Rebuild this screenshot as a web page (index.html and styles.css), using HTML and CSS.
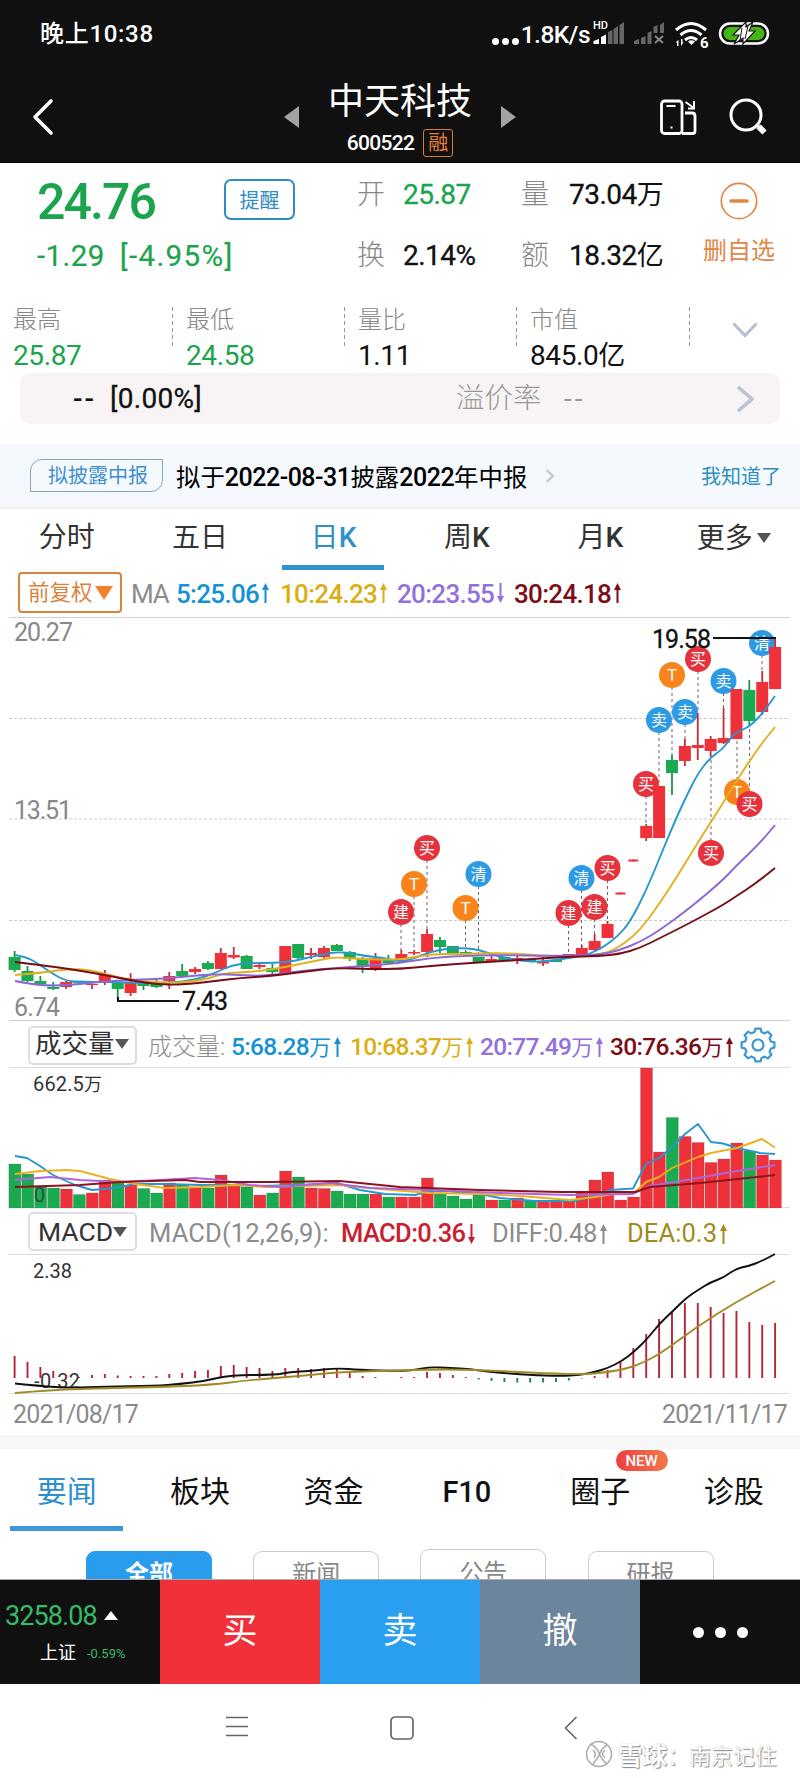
FILE: index.html
```html
<!DOCTYPE html>
<html lang="zh-CN">
<head>
<meta charset="utf-8">
<title>中天科技 600522</title>
<link rel="stylesheet" href="styles.css">
</head>
<body>
<div class="phone">
  <header class="top">
    <div class="status">
      <span class="clock">晚上10:38</span>
      <span class="net"><i class="dots"><b></b><b></b><b></b></i><span class="speed">1.8K/s</span></span>
      <svg class="status-icons" width="180" height="34" viewBox="590 16 180 34">
        <text x="593" y="29" class="hd">HD</text>
        <path fill="#fff" d="M593.500 44v-3l5.500-2v5zM601 44v-7l5-2.500v9.500z"/>
        <path fill="#666" d="M608 44V32l4.500-2v14zM613.500 44V29l4.500-3v18zM619.500 44V25l4.500-3v22zM634 44v-3l5-2v5zM641 44v-6l4.500-2v8zM647.500 44V33l4-2v13zM653.500 33v-6l4-2v8zM660 33v-8l4-3v11z"/>
        <path stroke="#888" stroke-width="2" d="M655 36l8 7M663 36l-8 7"/>
        <g fill="none" stroke="#fff" stroke-width="3"><path d="M676 30q15-13 30 0M680.500 35q10.500-9 21 0M685 40q6-5 12 0"/></g>
        <path fill="#fff" d="M688 41.500q3.500-2.500 7 0L691.500 45zM676 42l2.500-2v6h-1.500v-3zM681 39h1.500v3.500h1l-2.500 3.500z"/>
        <text x="700" y="48" class="six">6</text>
        <rect x="720" y="23.500" width="48" height="20" rx="10" fill="#151515" stroke="#fff" stroke-width="2.500"/>
        <rect x="723.500" y="27" width="41" height="13" rx="6.500" fill="#45b514"/>
        <path d="M746 22L733 35h6l-5 9 9-6 0 6 12-13h-6l4-9-7 5z" fill="#fff" stroke="#151515" stroke-width="1.200"/>
        <path d="M742 28l-2 12M748 26l-3 13" stroke="#151515" stroke-width="1"/>
      </svg>
    </div>
    <div class="titlebar">
      <svg width="28" height="40" viewBox="0 0 28 40"><path d="M23 4L7 20l16 16" fill="none" stroke="#fff" stroke-width="3.600" stroke-linecap="round" stroke-linejoin="round"/></svg>
      <svg width="16" height="22" viewBox="0 0 16 22"><path d="M0 11L15 0v22z" fill="#a2a2a2"/></svg>
      <div class="title"><h1>中天科技</h1><p><span class="code">600522</span><span class="tag">融</span></p></div>
      <svg width="16" height="22" viewBox="0 0 16 22"><path d="M16 11L1 0v22z" fill="#a2a2a2"/></svg>
      <svg width="38" height="38" viewBox="659 98 38 38" fill="none" stroke="#fff" stroke-width="2.800"><rect x="661.500" y="101" width="20.500" height="32.500" rx="3"/><path d="M682 133.500h10.500q2.500 0 2.500-2.500V116q0-3-3-3h-7"/><path d="M666.500 106h9M670.500 127.500h2M685.500 102l8.500 6M694 101v7.500h-6" stroke-width="2"/></svg>
      <svg width="40" height="38" viewBox="728 98 40 38" fill="none" stroke="#fff" stroke-width="3"><circle cx="746" cy="115" r="15"/><path d="M757 125l3 3" /><path d="M758.500 126.500l6 6" stroke-width="6"/></svg>
    </div>
  </header>

  <section class="quote">
    <div class="price">24.76</div>
    <button class="remind">提醒</button>
    <span class="k">开</span><span class="v green">25.87</span><span class="k">量</span><span class="v">73.04<em>万</em></span>
    <div class="unfollow"><svg width="38" height="38" viewBox="0 0 38 38"><circle cx="19" cy="19" r="17.700" fill="none" stroke="#e08746" stroke-width="1.700"/><path d="M11 19h16" stroke="#e08746" stroke-width="3.600" stroke-linecap="round"/></svg><span>删自选</span></div>
    <div class="change"><span>-1.29</span><span>[-4.95%]</span></div>
    <span class="k k2">换</span><span class="v v2">2.14%</span><span class="k k2">额</span><span class="v v2">18.32<em>亿</em></span>
  </section>

  <section class="stats">
    <div><small>最高</small><span class="green">25.87</span></div>
    <div><small>最低</small><span class="green">24.58</span></div>
    <div><small>量比</small><span>1.11</span></div>
    <div><small>市值</small><span>845.0<em>亿</em></span></div>
    <div class="expand"><svg width="26" height="16" viewBox="0 0 26 16"><path d="M1.500 1.500L13 13.500 24.500 1.500" fill="none" stroke="#b2c1cf" stroke-width="3"/></svg></div>
  </section>

  <section class="premium"><span class="dash">--</span><span class="pct">[0.00%]</span><span class="label">溢价率</span><span class="dash2">--</span>
    <svg width="18" height="28" viewBox="0 0 18 28"><path d="M2 2l14 12L2 26" fill="none" stroke="#b9c4d0" stroke-width="3.600"/></svg></section>

  <section class="notice"><span class="chip">拟披露中报</span><span class="msg">拟于<b>2022-08-31</b>披露<b>2022</b>年中报</span>
    <svg width="10" height="14" viewBox="0 0 10 14"><path d="M1.500 1l6.500 6-6.500 6" fill="none" stroke="#b9c4d0" stroke-width="2"/></svg><a>我知道了</a></section>

  <nav class="periods"><span>分时</span><span>五日</span><span class="on">日<b>K</b></span><span>周<b>K</b></span><span>月<b>K</b></span><span class="rest">更多<i class="tri"></i></span></nav>

  <div class="ma">
    <span class="adjust">前复权<i class="tri"></i></span><span class="gray">MA</span>
    <span class="c5">5:25.06<svg class="ar" viewBox="0 0 7 20"><path d="M3.500 0L7 7H4.500v13h-2V7H0z"/></svg></span>
    <span class="c10">10:24.23<svg class="ar" viewBox="0 0 7 20"><path d="M3.500 0L7 7H4.500v13h-2V7H0z"/></svg></span>
    <span class="c20">20:23.55<svg class="ar" viewBox="0 0 7 20"><path d="M3.500 20L7 13H4.500V0h-2v13H0z"/></svg></span>
    <span class="c30">30:24.18<svg class="ar" viewBox="0 0 7 20"><path d="M3.500 0L7 7H4.500v13h-2V7H0z"/></svg></span>
  </div>
  <svg id="candles" class="chart" width="800" height="404" viewBox="0 617 800 404"></svg>

  <div class="ind vol">
    <span class="select">成交量<i class="tri"></i></span><span class="gray">成交量:</span>
    <span class="c5">5:68.28<em>万</em><svg class="ar" viewBox="0 0 7 20"><path d="M3.500 0L7 7H4.500v13h-2V7H0z"/></svg></span>
    <span class="c10">10:68.37<em>万</em><svg class="ar" viewBox="0 0 7 20"><path d="M3.500 0L7 7H4.500v13h-2V7H0z"/></svg></span>
    <span class="c20">20:77.49<em>万</em><svg class="ar" viewBox="0 0 7 20"><path d="M3.500 0L7 7H4.500v13h-2V7H0z"/></svg></span>
    <span class="c30">30:76.36<em>万</em><svg class="ar" viewBox="0 0 7 20"><path d="M3.500 0L7 7H4.500v13h-2V7H0z"/></svg></span>
    <svg id="gear" width="36" height="36" viewBox="-18 -18 36 36"></svg>
  </div>
  <svg id="volume" class="chart" width="800" height="142" viewBox="0 1067 800 142"></svg>

  <div class="ind macd">
    <span class="select">MACD<i class="tri"></i></span><span class="gray fn">MACD(12,26,9):</span>
    <span class="cm">MACD:0.36<svg class="ar" viewBox="0 0 7 20"><path d="M3.500 20L7 13H4.500V0h-2v13H0z"/></svg></span>
    <span class="gray">DIFF:0.48<svg class="ar" viewBox="0 0 7 20"><path d="M3.500 0L7 7H4.500v13h-2V7H0z"/></svg></span>
    <span class="cd">DEA:0.3<svg class="ar" viewBox="0 0 7 20"><path d="M3.500 0L7 7H4.500v13h-2V7H0z"/></svg></span>
  </div>
  <svg id="macd" class="chart" width="800" height="142" viewBox="0 1253 800 142"></svg>
  <div class="dates"><span>2021/08/17</span><span>2021/11/17</span></div>

  <nav class="sections"><span class="on">要闻</span><span>板块</span><span>资金</span><span class="f10">F10</span><span>圈子<sup>NEW</sup></span><span>诊股</span></nav>
  <div class="pills"><span class="on">全部</span><span>新闻</span><span class="up">公告</span><span>研报</span></div>

  <footer class="actions">
    <div class="index"><p class="pt">3258.08<i></i></p><p class="nm"><span>上证</span><small>-0.59%</small></p></div>
    <div class="buy">买</div><div class="sell">卖</div><div class="cancel">撤</div>
    <div class="more"><i></i><i></i><i></i></div>
  </footer>
  <div class="sysnav">
    <svg width="22" height="22" viewBox="0 0 22 22"><path d="M0 1.500h22M0 10.500h22M0 19.500h22" stroke="#666" stroke-width="1.600"/></svg>
    <svg width="24" height="24" viewBox="0 0 24 24"><rect x="1" y="1" width="22" height="22" rx="4" fill="none" stroke="#666" stroke-width="1.700"/></svg>
    <svg width="14" height="24" viewBox="0 0 14 24"><path d="M12.500 1L1.500 12l11 11" fill="none" stroke="#666" stroke-width="1.700"/></svg>
    <div class="mark"><svg width="28" height="28" viewBox="0 0 28 28" fill="none" stroke="#aaa"><circle cx="14" cy="14" r="12.500" stroke-width="1.500"/><path d="M5 4q7 3 9 9t8 11M22 5q-5 3-7 8t-7 11M8 10q4 4 1 8M20 10q-5 4 0 8" stroke-width="1.500"/></svg><b>雪球</b><span>：南京记住</span></div>
  </div>
</div>
<script src="script.js"></script>
</body>
</html>
```
FILE: styles.css
```css
* { box-sizing: border-box; }
body { margin: 0; background: #fff; font-family: Roboto, "Noto Sans CJK SC", sans-serif; font-weight: 400; color: #111; }
h1, p { margin: 0; font-weight: 400; }
em, i { font-style: normal; }
svg { display: block; flex: none; }
.phone { width: 800px; height: 1778px; overflow: hidden; display: flex; flex-direction: column; }
.phone > * { flex: none; }
span, div { white-space: nowrap; }
.green { color: #1ba44c; }
.gray { color: #8c8c8c; }
.tri { display: inline-block; border: 7px solid transparent; border-top: 10px solid #555; border-bottom: 0; }

.top { height: 163px; background: #101010; color: #fff; border-bottom: 1px solid #000; }
.status { height: 68px; display: grid; grid-template-columns: 40px 452px 98px 180px; }
.clock { grid-column: 2; font-size: 24px; font-weight: 500; line-height: 69px; letter-spacing: .7px; }
.net { display: flex; line-height: 68px; align-items: center; }
.dots { display: flex; gap: 3px; padding-top: 13px; width: 29px; }
.dots b { width: 7px; height: 7px; border-radius: 50%; background: #fff; }
.speed { font-size: 24.5px; font-weight: 500; letter-spacing: -.5px; }
.status-icons { margin-top: 16px; overflow: visible; }
.hd { font: 500 11px Roboto; fill: #fff; }
.six { font: 700 15px Roboto; fill: #fff; }
.titlebar { height: 94px; display: grid; grid-template-columns: 256px 15px 201px 158px 70px 40px; justify-content: start; align-items: start; padding-left: 28px; }
.titlebar > svg:nth-child(1) { margin-top: 29px; }
.titlebar > svg:nth-child(2), .titlebar > svg:nth-child(4) { margin-top: 38px; }
.titlebar > svg:nth-child(5), .titlebar > svg:nth-child(6) { margin-top: 30px; }
.titlebar > svg:nth-child(5) { margin-left: 1px; }
.title { text-align: center; padding: 7px 0 0 1px; }
h1 { font-size: 36px; line-height: 54px; font-weight: 400; }
.title p { display: flex; justify-content: center; align-items: center; gap: 9px; line-height: 28px; }
.code { font-size: 21px; letter-spacing: -.7px; font-weight: 500; }
.tag { font-size: 20px; line-height: 26px; width: 30px; height: 28px; color: #e8803a; border: 1px solid #d57b3e; border-radius: 3px; }

.quote { height: 135px; display: grid; grid-template-columns: 187px 133px 46px 118px 48px 144px 90px; grid-template-rows: 62px 73px; padding-left: 37px; }
.price { font-size: 50px; font-weight: 500; line-height: 78px; letter-spacing: -1.9px; color: #1ba44c; }
.remind { margin: 16px 0 0; width: 71px; height: 41px; border: 2px solid #2f8cc4; border-radius: 7px; background: #fff; color: #2f8cc4; font: 20px Roboto, "Noto Sans CJK SC"; padding: 0; }
.k { font-size: 28px; line-height: 64px; font-weight: 300; color: #888; }
.v { font-size: 28px; line-height: 64px; letter-spacing: -.5px; font-weight: 400; -webkit-text-stroke: .3px; }
.v em { font-weight: 400; font-size: 27px; -webkit-text-stroke: 0; }
.change { grid-column: 1 / 3; font-size: 29.5px; line-height: 62px; letter-spacing: .4px; font-weight: 400; color: #1ba44c; display: flex; gap: 15px; -webkit-text-stroke: .2px; }
.change span + span { letter-spacing: 1.4px; }
.k2, .v2 { line-height: 61px; }
.unfollow { grid-column: 7; grid-row: 1 / 3; display: flex; flex-direction: column; align-items: center; width: 76px; margin-left: -12px; padding-top: 19px; color: #e08746; font-size: 24px; line-height: 36px; gap: 13px; }

.stats { height: 75px; display: grid; grid-template-columns: 173px 172px 172px 173px 110px; }
.stats > div { display: flex; flex-direction: column; padding-left: 13px; padding-top: 5px; background: repeating-linear-gradient(#999 0 4px, transparent 4px 7px) right 9px / 1px 41px no-repeat; }
.stats .expand { background: none; padding: 24px 0 0 42px; }
.stats small { font-size: 24px; line-height: 34px; color: #888; font-weight: 300; }
.stats span { font-size: 28px; line-height: 38px; letter-spacing: -.4px; font-weight: 400; }
.stats em { font-size: 27px; }

.premium { height: 51px; margin: 0 20px; background: #f8f4f5; border-radius: 9px; display: grid; grid-template-columns: 37px 346px 108px 172px 30px; padding-left: 53px; line-height: 52px; align-items: center; font-size: 28px; }
.dash { letter-spacing: 2px; font-weight: 500; }
.pct { letter-spacing: .3px; -webkit-text-stroke: .3px; }
.label { color: #999; font-weight: 300; font-size: 28.5px; }
.dash2 { color: #999; letter-spacing: 3px; }

.notice { height: 65px; margin-top: 20px; background: #f5f9fe; border-bottom: 2px solid #eff2f6; display: grid; grid-template-columns: 146px 369px 156px 90px; padding-left: 30px; align-items: center; }
.chip { width: 133px; height: 33px; border: 1px solid #86a7b7; border-radius: 12px 0 12px 0; color: #3e90cf; font-size: 20px; line-height: 33px; padding-left: 17px; }
.msg { font-size: 24.4px; color: #000; }
.msg b { font-weight: 500; letter-spacing: -.5px; font-size: 25px; }
.notice a { color: #2e8fc0; font-size: 20px; }

.periods { height: 61px; display: grid; grid-template-columns: repeat(6, 133.4px); text-align: center; font-size: 28px; line-height: 58px; color: #333; }
.periods b { font-weight: 500; }
.periods .on { color: #2f8fcb; background: linear-gradient(#3192cd, #3192cd) center 56px / 102px 5px no-repeat; }
.periods .tri { margin-left: 4px; vertical-align: 5px; border-width: 10px 7px 0; }
.periods .rest { line-height: 60px; }

.ma { height: 47px; display: grid; grid-template-columns: 113px 45px 104px 117px 117px 120px; padding-left: 18px; line-height: 48px; font-size: 26px; letter-spacing: -.7px; font-weight: 500; }
.ma .gray { font-weight: 400; letter-spacing: -1.2px; }
.adjust { width: 104px; height: 41px; margin-top: 2px; border: 2px solid #d9833b; border-radius: 4px; line-height: 38px; font-size: 21.5px; letter-spacing: 0; font-weight: 400; color: #d9833b; padding-left: 8px; }
.adjust .tri { border-width: 14px 9px 0; border-top-color: #f5822a; margin-left: 2px; }
.ar { display: inline-block; width: 7px; height: 20px; margin-left: 3px; fill: currentColor; }
.c5 { color: #1592d2; } .c10 { color: #dbae14; } .c20 { color: #9370db; } .c30 { color: #7d0c18; } .cm { color: #c9202f; } .cd { color: #a18b1d; }
.chart text { font-family: Roboto, "Noto Sans CJK SC"; }

.ind { height: 46px; display: grid; padding-left: 28px; line-height: 52px; font-size: 24.500px; letter-spacing: -.7px; font-weight: 400; }
.ind em { font-weight: 400; font-size: 22px; letter-spacing: 0; }
.vol { grid-template-columns: 120px 83px 119px 130px 130px 131px 50px; font-weight: 500; }
.vol .gray { font-size: 24px; font-weight: 300; letter-spacing: 0; }
.macd { grid-template-columns: 121px 192px 151px 135px 120px; line-height: 48px; font-size: 25.500px; font-weight: 400; letter-spacing: -.3px; height: 44px; }
.macd .fn { letter-spacing: .15px; }
.macd .cm { font-weight: 500; letter-spacing: -.6px; }
.macd .cd { letter-spacing: .1px; }
.select { width: 109px; height: 39px; margin-top: 5px; border: 2px solid #ddd; border-radius: 5px; line-height: 32px; color: #333; font-size: 26.500px; padding-left: 5px; letter-spacing: 0; font-weight: 400; }
.macd .select { margin: 3px 0 0; line-height: 35px; padding-left: 8px; }
.select .tri { vertical-align: 4px; }
#gear { margin: 6px 0 0 -1px; }
.ind .ar { margin-left: 3px; vertical-align: -2px; }

.dates { height: 40px; display: flex; justify-content: space-between; padding: 0 13px; font-size: 25px; line-height: 40px; color: #8a8a8a; letter-spacing: -.8px; }
.sections { height: 103px; border-top: 14px solid #f7f7f7; display: grid; grid-template-columns: repeat(6, 133.4px); text-align: center; font-size: 30px; line-height: 86px; color: #111; }
.sections .on { color: #2f8fcb; background: linear-gradient(#3a98da, #3a98da) center 77px / 113px 5px no-repeat; }
.sections .f10 { font-weight: 500; font-size: 29px; }
.sections span { position: relative; }
.sections sup { position: absolute; left: 82px; top: 1px; width: 52px; height: 21px; border-radius: 11px; background: linear-gradient(90deg, #ee4040, #f2784b); color: #fff; font-size: 15px; font-weight: 500; line-height: 22px; }
.pills { height: 41px; overflow: hidden; display: grid; grid-template-columns: repeat(4, 126px); column-gap: 41.200px; padding: 13px 0 0 86px; text-align: center; font-size: 24px; }
.pills span { height: 50px; line-height: 45px; border: 1px solid #ccc; border-radius: 9px; color: #888; }
.pills .on { background: #2a9cee; border-color: #2a9cee; color: #fff; font-weight: 700; }
.pills .up { margin-top: -2px; line-height: 47px; }
.actions { height: 103px; border-top: 1px solid #aaa; display: grid; grid-template-columns: repeat(5, 160px); color: #fff; font-size: 35px; font-weight: 400; text-align: center; line-height: 104px; }
.index { background: #101010; text-align: left; padding: 16px 0 0 5px; }
.pt { color: #36bb68; font-size: 27px; line-height: 40px; letter-spacing: -.9px; }
.pt i { display: inline-block; border: 7px solid transparent; border-bottom: 9px solid #fff; border-top: 0; margin-left: 7px; vertical-align: 5px; }
.nm { font-size: 18px; line-height: 33px; padding-left: 35px; display: flex; gap: 11px; }
.nm small { color: #36bb68; font-size: 13px; line-height: 36px; }
.buy { background: #ef3139; } .sell { background: #2a9eef; } .cancel { background: #6b859d; }
.more { background: #101010; display: flex; align-items: center; justify-content: center; gap: 11px; }
.more i { width: 11px; height: 11px; border-radius: 50%; background: #fff; }
.sysnav { height: 96px; display: grid; grid-template-columns: 164px 174px 21px 214px; padding: 34px 0 0 226px; }
.mark { display: flex; align-items: center; height: 30px; margin-top: 23px; color: #fff; font-size: 21.800px; letter-spacing: .1px; text-shadow: 1px 1px 1px #888, 0 0 1px #aaa; }
.mark b { margin-left: 5px; font-size: 24.500px; }
```
FILE: script.js
```javascript
const RED = '#ef3139', GREEN = '#1aab50';
const X = i => 14.6 + i * 12.89;
const line = (pts, color, w = 1.9) => `<path d="M${pts.split(' ').join('L')}" fill="none" stroke="${color}" stroke-width="${w}" stroke-linejoin="round"/>`;
const curve = (str, color, w = 1.9) => {
  const p = str.split(' ').map(s => s.split(',').map(Number));
  let d = `M${p[0]}`;
  for (let i = 1; i < p.length - 1; i++) d += `Q${p[i]} ${(p[i][0] + p[i + 1][0]) / 2},${(p[i][1] + p[i + 1][1]) / 2}`;
  return `<path d="${d}L${p[p.length - 1]}" fill="none" stroke="${color}" stroke-width="${w}"/>`;
};
const rule = (y, c = '#d0d0d0') => `<path d="M9 ${y}H790" stroke="${c}"/>`;
const text = (x, y, s, size, len, color, extra = '') => `<text x="${x}" y="${y}" font-size="${size}" textLength="${len}" fill="${color}" ${extra}>${s}</text>`;

// colour, high, body top, body bottom, low
const candles = `g951,957,970,972 g966,971,981,982 g976,981,984,985 g982,987,989,990 r981,982,987,989 g981,981,983,984 r984,984,985,989 r970,974,981,985 g982,983,989,1000 r973,982,993,996 g982,984,986,990 g979,984,987,988 r972,976,981,989 g964,971,976,977 r967,969,972,974 g961,963,969,970 r948,953,969,969 r947,955,957.5,959 g955,956,969,969 r963,965,967,969 g964,968,972,974 r946,946,973,973 g944,944,958,959 r948,953,955,959 r946,948,957,958 g944,945,951,951 g951,952,959,961 g957,958,967,973 r953,958,970,971 g955,959,963,964 r950,954,959,959 r950,952,953.5,955 r929,934,952,957 g937,940,947,953 g946,946,953,953 g951,952,953.5,954 g957,957,963,963 r956,959,962,962 g957,957,961,961 r956,958,960,964 g959,959,961,961 r957,962,963.5,966 g960,960,962,962 r954,954,955.5,956 r945,948,955,955 r934,941,950,951 r921,924,938,938 r892.500,892.500,894.500,894.500 r859.500,859.500,861.500,861.500 r824,826,838,841 r786,786,838,838 g755,760,773,795 r739,746,761,766 r713,745,748,760 r736,739,751,757 r708,738,743,744 r689,689,739,739 g680,690,721,725 r671,682,712,715 r638,647,689,689`.split(' ');
// x, y, label, y where the dotted line ends
const badges = [[401,912,'建',955],[414,884,'T',950],[427,848,'买',930],[465.5,908,'T',952],[478.5,874,'清',957],[568.5,913,'建',954],[581.5,878,'清',946],[594.5,907,'建',936],[607.5,868,'买',922],[646,784,'买',824],[659,720,'卖',786],[672,675,'T',755],[685,712,'卖',739],[698,659,'买',713],[711,853,'买',757],[723.5,681,'卖',708],[737,792,'T',739],[749.5,804,'买',724],[762,643,'清',671]];
const hue = { 建: '#e5323c', 买: '#e5323c', T: '#f8841b', 清: '#2d9ae6', 卖: '#2d9ae6' };

let s = rule(617.5) + rule(1020.5);
for (const y of [718.5, 819, 920.5]) s += `<path d="M9 ${y}H790" stroke="#ccc" stroke-dasharray="3 2"/>`;
for (const [x, y, , e] of badges) s += `<path d="M${x} ${y}V${e}" stroke="#76606a" stroke-dasharray="3 3"/>`;
s += text(14, 641, '20.27', 25, 59, '#888') + text(14, 819, '13.51', 25, 58, '#888') + text(14, 1016, '6.74', 25, 46, '#888');
for (const [x, y, t] of badges) s += `<circle cx="${x}" cy="${y}" r="13" fill="${hue[t]}"/><text x="${x}" y="${y + 6}" font-size="${t === 'T' ? 17 : 16}" text-anchor="middle" fill="#fff">${t}</text>`;
candles.forEach((c, i) => {
  const [h, a, b, l] = c.slice(1).split(',').map(Number), x = X(i), f = c[0] === 'r' ? RED : GREEN;
  const w = i === 47 || i === 48 ? 10 : 12;
  s += `<path d="M${x} ${h}V${l}" stroke="${c[0] === 'r' ? '#c92b38' : '#189647'}" stroke-width="1.8"/><rect x="${x - w / 2}" y="${a}" width="${w}" height="${b - a}" fill="${f}"/>`;
});
s += curve('15,955 27,957 40,965 53,974 66,981 85,982 100,982 120,982 140,983 170,983 195,980 215,973 232,965 250,963 275,963 295,961 310,957 325,954 337,952 350,953 365,956 385,958 400,962 415,958 430,952 445,949 460,948 475,949 485,952 500,957 530,962 550,961 575,957 590,954 605,946 618,936 630,922 646,891 660,857 672,828 684,801 698,773 711,757 723,749 733,735 740,731 750,726 762,714 775,696', '#2598cf');
s += curve('15,975 40,973 60,970 75,969 90,970 105,974 130,980 165,983 190,982 210,978 225,973 250,972 275,969 300,964 320,960 335,957 360,959 400,960 430,954 460,954 500,953 520,954 560,957 590,956 610,952 625,943 640,930 655,910 675,880 700,839 725,800 737,780 749,762 762,743 775,727', '#dfb120');
s += curve('15,981 30,984 53,986 80,984 120,980 160,979 190,976 215,974 240,975 265,976 300,971 335,968 365,966 400,963 430,958 460,956 500,955 550,956 600,955 620,950 640,942 660,930 690,908 723,880 735,867 760,843 775,825', '#8d67d3');
s += curve('15,962 40,965 70,969 105,975 140,982 165,985 190,984 215,981 240,978 270,976 310,971 335,968 370,969 400,969 430,966 470,963 520,960 560,957 600,956 620,954 640,948 660,938 690,923 723,905 735,897 755,884 775,868', '#780d18');
s += `<path d="M118 997v4h61M713 638h63" fill="none" stroke="#111" stroke-width="2"/>`;
s += text(182, 1010, '7.43', 25, 46, '#111', 'stroke="#111" stroke-width=".3"') + text(652, 648, '19.58', 25, 59, '#111', 'stroke="#111" stroke-width=".3"');
document.getElementById('candles').innerHTML = s;

const vols = 'g1164 g1174 g1187 g1188 r1189 g1194.5 r1193 r1180 g1183 r1185 g1188.5 g1193 r1183 g1185 r1188 g1188 r1175 r1186 g1187 r1195 g1193 r1171 g1177 r1188 r1188.5 g1191 g1194 g1194 r1194 g1197 r1197 r1197 r1178 g1193 g1196 g1199 g1195 r1200 g1200 r1198 g1201 r1201 r1201 r1201 r1192 r1180 r1172 r1200 r1197 r1068 r1152 g1117.5 r1136.5 r1142.5 r1162.5 r1159 r1143 g1151 r1155 r1160'.split(' ');
s = rule(1067.5, '#ddd') + rule(1207.500, '#ddd');
vols.forEach((v, i) => { const y = +v.slice(1); s += `<rect x="${X(i) - 5.7}" y="${y}" width="12" height="${1208 - y}" fill="${v[0] === 'r' ? RED : GREEN}" stroke="#555" stroke-opacity=".35" stroke-width=".6"/>`; });
s += text(33, 1091, '662.5<tspan font-size="18">万</tspan>', 20, 69, '#333') + text(34, 1202, '0', 20, 9, '#28543a');
s += line('15,1156 27,1158 40,1166 53,1175 75,1185 92,1190 115,1188 135,1184 165,1184 200,1185 230,1185 260,1186 300,1185 337,1183 360,1190 385,1194 415,1195 430,1191 445,1191 480,1194 500,1198 535,1201 575,1201 595,1196 610,1190 633,1188.5 646,1164 659,1158 672,1147 685,1134 698,1124 711,1142 723,1143.5 737,1148 760,1153 775,1154', '#2598cf');
s += line('15,1174 40,1171 66,1170 80,1171 110,1179 135,1184 165,1188 200,1187 235,1185 265,1187 300,1186 340,1185 380,1189 430,1193 480,1194 520,1196 570,1200 595,1197 620,1193 635,1192 646,1182 659,1177 672,1168 698,1157 711,1153 737,1148 762,1139 775,1147.5', '#eeb020');
s += line('15,1180 50,1177 80,1180 120,1182 160,1180 195,1178 220,1180 250,1185 280,1187 330,1183 370,1188 430,1190 500,1193 570,1195 633,1194 650,1186 698,1178 737,1171 775,1165', '#b163d8');
s += line('15,1187 80,1185 120,1182 185,1180 200,1182 270,1182 340,1181 400,1187 480,1190 560,1192 635,1192 650,1187 700,1183 775,1175', '#8c1420');
document.getElementById('volume').innerHTML = s;

const hist = [1356,1362,1367,1371,1375,1377,1375,1374,1375.5,1376,1376,1376,1374,1373,1371,1370,1366,1365,1367,1368,1371,1368,1368,1369,1368,1368,1372,1376,1377,1378,1377,1377,1372,1373,1375,1377,1379.5,1381,1382,1382.5,1382.5,1382.5,1382,1380.5,1378.5,1376,1370,1361,1348,1334,1319,1311,1303,1303,1307,1313,1311,1322,1325,1323];
s = rule(1254.5, '#ddd') + rule(1393.5, '#ddd') + text(33, 1278, '2.38', 20, 39, '#333') + text(34, 1388, '-0.32', 20, 46, '#333');
hist.forEach((y, i) => s += `<path d="M${X(i)} ${y}V1378" stroke="${y > 1378 ? '#168646' : '#b42436'}" stroke-width="1.9"/>`);
s += curve('15,1383.5 40,1386 70,1388 105,1386.5 155,1386 180,1384 205,1381 230,1375 275,1375 290,1372 310,1371 337,1368 360,1370 400,1371 415,1370 430,1367 450,1368 470,1369 490,1372 530,1375 560,1376 580,1375 595,1372 608,1368 622,1361 635,1351 648,1338 660,1323 673,1311 686,1298 698,1290 711,1282 723,1278 736,1268.5 749,1266 762,1261 775,1254', '#111');
s += curve('15,1393 50,1390 110,1388 160,1387 210,1385 250,1380 300,1376 340,1372 400,1370.5 450,1369 500,1371 560,1374 590,1374 608,1372 625,1369 640,1364 660,1354 698,1326 736,1302 775,1281', '#a08a24');
document.getElementById('macd').innerHTML = s;

// eight-toothed settings gear
const pts = [];
for (let k = 0; k < 8; k++) for (const [o, r] of [[-15, 13.4], [-9, 16.6], [9, 16.6], [15, 13.4]]) {
  const a = (k * 45 + o) * Math.PI / 180;
  pts.push(`${(r * Math.cos(a)).toFixed(1)},${(r * Math.sin(a)).toFixed(1)}`);
}
document.getElementById('gear').innerHTML = `<path d="M${pts.join('L')}Z" fill="none" stroke="#3c98d4" stroke-width="2.200" stroke-linejoin="round"/><circle r="5.500" fill="none" stroke="#3c98d4" stroke-width="2.200"/>`;
```
